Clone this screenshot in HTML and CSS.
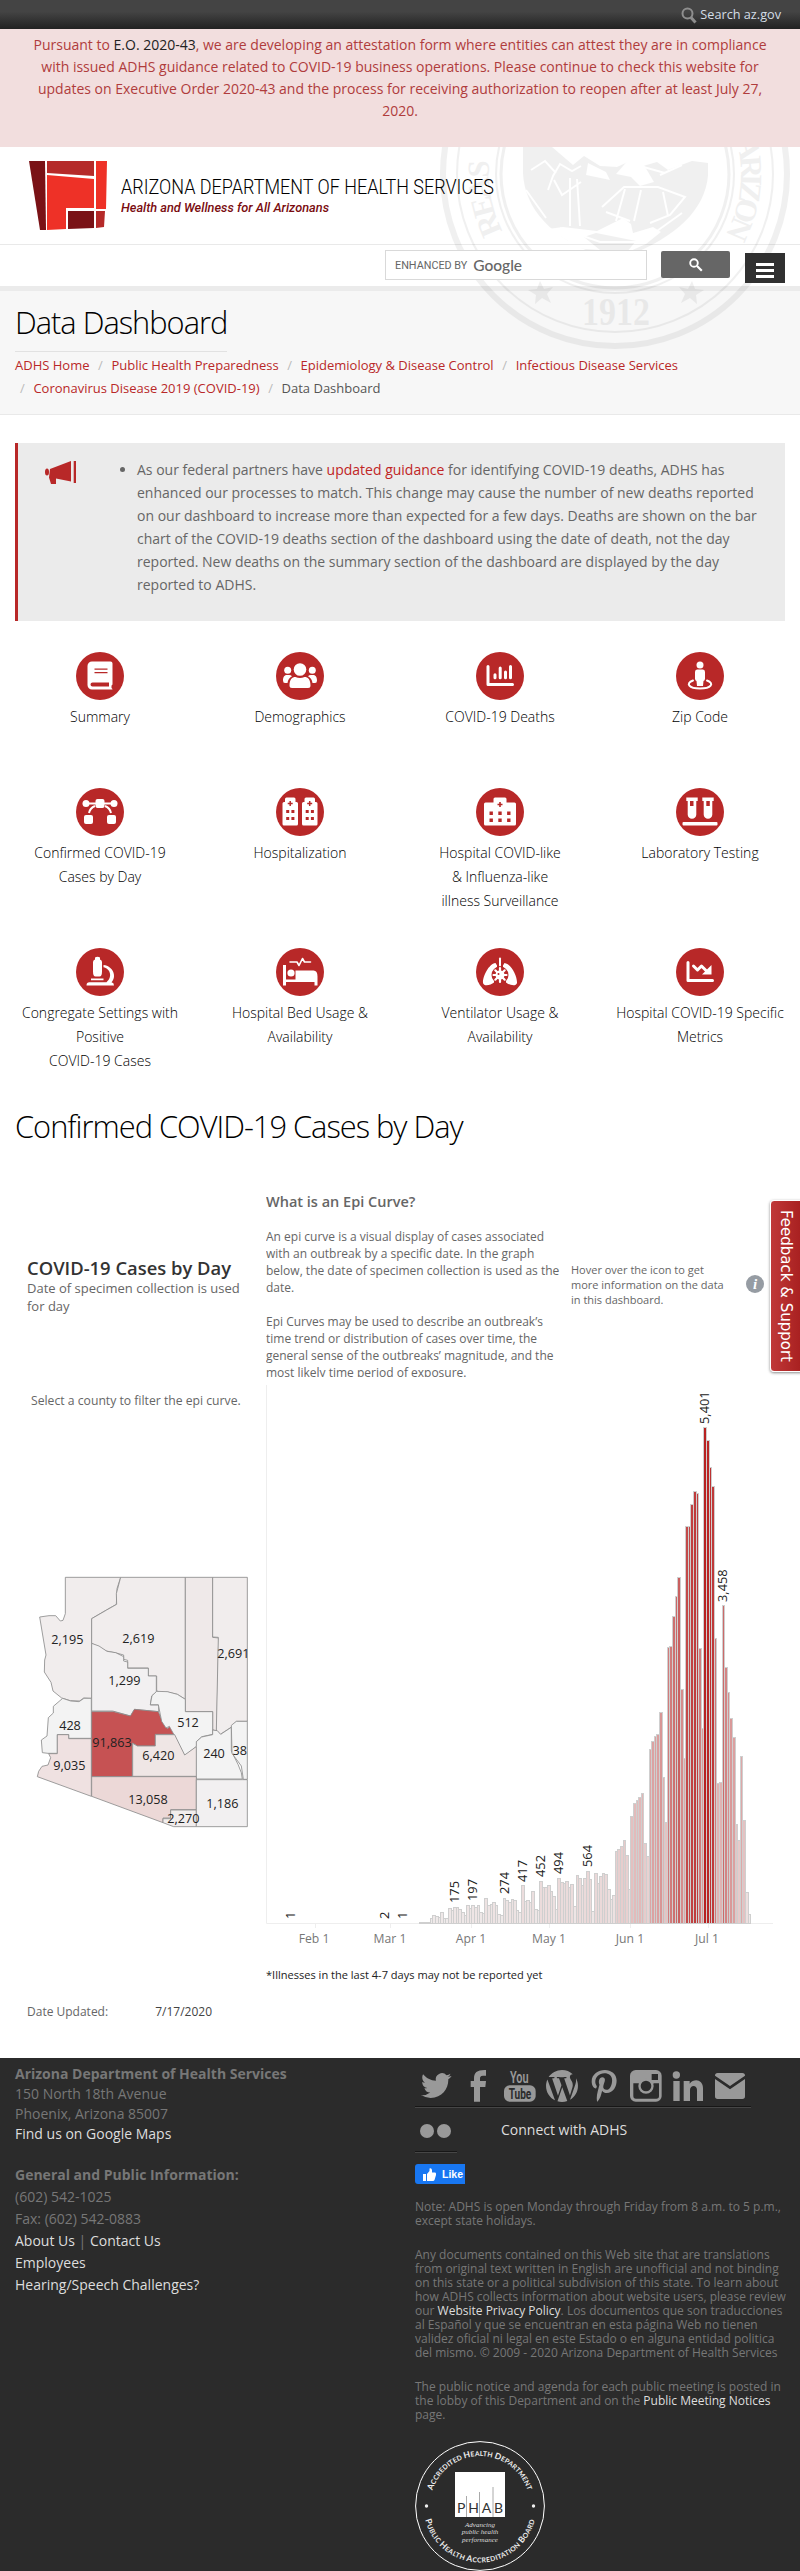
FILE: index.html
```html
<!DOCTYPE html>
<html lang="en">
<head>
<meta charset="utf-8">
<title>Data Dashboard</title>
<link rel="stylesheet" href="styles.css">
</head>
<body>
<svg class="defs" width="0" height="0" aria-hidden="true">
  <defs>
    <symbol id="i-book" viewBox="0 0 48 48"><path fill="#fff" fill-rule="evenodd" d="M15 9.500h19.500a2 2 0 0 1 2 2v20.500q0 1-1 1.500v2.500q1 .5 1 1.500h-20.500a4.500 4.500 0 0 1-4.500-4.500v-19a4.500 4.500 0 0 1 4.500-4.500zM16.500 30.500a2 2 0 0 0 0 4h16.500v-4zM18.500 16.500v1.300h13v-1.300zM18.500 20v1.300h13v-1.300z"/></symbol>
    <symbol id="i-people" viewBox="0 0 48 48"><g fill="#fff"><circle cx="24" cy="17.500" r="6.300"/><circle cx="11.700" cy="18.300" r="3.500"/><circle cx="36.300" cy="18.300" r="3.500"/><path d="M13.500 33.500c0-6 2.500-8.500 6-8.500q4.500 2 9 0c3.500 0 6 2.500 6 8.500q0 2.500-2.500 2.500h-16q-2.500 0-2.500-2.500zM7 28.500c0-4 1.700-5.500 4-5.500h2q2 0 3 1.200c-2.700 1.500-4 3.600-4.500 6.800h-2.500q-2 0-2-2.500zM41 28.500c0-4-1.700-5.500-4-5.500h-2q-2 0-3 1.200c2.700 1.500 4 3.600 4.500 6.800h2.500q2 0 2-2.500z"/></g></symbol>
    <symbol id="i-bars" viewBox="0 0 48 48"><path fill="none" stroke="#fff" stroke-width="3" stroke-linecap="round" stroke-linejoin="round" d="M12 14.500v18h24.500"/><path stroke="#fff" stroke-width="3" stroke-linecap="round" d="M19 22.800v3M24.200 16v9.800M29.500 20v5.800M34.500 14.500v11.300"/></symbol>
    <symbol id="i-pin" viewBox="0 0 48 48"><g fill="#fff"><circle cx="24" cy="13" r="3.500"/><path d="M21 17.500h6q2 0 2 2.500v6.500q0 2-1.500 2.500l-.5 5h-6l-.5-5q-1.500-.5-1.500-2.500v-6.500q0-2.500 2-2.500z"/></g><path fill="none" stroke="#fff" stroke-width="2" stroke-linecap="round" d="M17 28.500c-8 3 -4 8 7 8s15-5 7-8"/></symbol>
    <symbol id="i-net" viewBox="0 0 48 48"><g fill="#fff"><circle cx="10" cy="15.500" r="3.500"/><circle cx="38" cy="15.500" r="3.500"/><rect x="19.500" y="11" width="9" height="9" rx="2"/><rect x="8" y="27" width="9" height="9" rx="2"/><rect x="31" y="27" width="9" height="9" rx="2"/></g><path fill="none" stroke="#fff" stroke-width="2" d="M12 15.500h24M19 18q-5 2-6 7M29 18q5 2 6 7"/></symbol>
    <symbol id="i-towers" viewBox="0 0 48 48"><g fill="#fff"><path id="tw" d="M9 14v-3q0-1.500 1.500-1.500h7.500q1.500 0 1.500 1.500v3h1q1.500 0 1.500 1.500v20.500q0 1.500-1.500 1.500h-12.500q-1.500 0-1.500-1.500v-20.500q0-1.500 1.500-1.500z"/><use href="#tw" x="19.500"/></g><path stroke="#b82828" stroke-width="1.500" d="M14.200 13v5M11.700 15.500h5M33.700 13v5M31.200 15.500h5"/><path stroke="#b82828" stroke-width="3" stroke-dasharray="3 2.200" d="M10.200 23.500h8.400M29.700 23.500h8.400M10.200 30.500h8.400M29.700 30.500h8.400"/></symbol>
    <symbol id="i-hosp" viewBox="0 0 48 48"><path fill="#fff" d="M17.500 14.500v-3.500q0-1.500 1.500-1.500h10q1.500 0 1.500 1.500v3.500h8q1.500 0 1.500 1.500v20q0 1.500-1.500 1.500h-29q-1.500 0-1.500-1.500v-20q0-1.500 1.500-1.500z"/><path stroke="#b82828" stroke-width="1.600" d="M24 14v5M21.500 16.500h5"/><path stroke="#b82828" stroke-width="3.400" stroke-dasharray="3.400 5.400" d="M13.500 25.200h22M13.500 32.300h22"/></symbol>
    <symbol id="i-tubes" viewBox="0 0 48 48"><path fill="#fff" d="M10.300 9.500h11.400v3.500h-1.400v13.500a4.300 4.300 0 0 1-8.600 0v-13.500h-1.400zM26.300 9.500h11.400v3.500h-1.400v13.500a4.300 4.300 0 0 1-8.600 0v-13.500h-1.400zM7.500 34h33q1 0 1 1v1.500q0 1-1 1h-33q-1 0-1-1v-1.500q0-1 1-1z"/><path fill="#b82828" d="M14 13h3.500v5h-3.500zM30.300 13h3.500v5h-3.500z"/></symbol>
    <symbol id="i-micro" viewBox="0 0 48 48"><path fill="#fff" d="M19 9.500q2.500-1.500 5 0v2q2 .5 2 2.500v9.500q0 5-2.500 5h-4q-2.500 0-2.500-5v-9.500q0-2 2-2.500zM15 30.500h12.500v1.700h-12.500zM10.500 37.500q0-3.200 3-3.200h17c7-6 3-14-3-15v-2.300c10 1 13.500 12 8 17.300q2.500.5 2.500 3.200z"/></symbol>
    <symbol id="i-bed" viewBox="0 0 48 48"><g fill="#fff"><path d="M7 17h3v14.500h9.500v-9h18q4 0 4 6v9h-3v-3.500h-28.500v3.500h-3z"/><circle cx="15" cy="25" r="3.600"/></g><path fill="none" stroke="#fff" stroke-width="1.600" stroke-linecap="round" stroke-linejoin="round" d="M14 14h7l2 3.500 3.500-7 2 3.500h6"/></symbol>
    <symbol id="i-lungs" viewBox="0 0 48 48"><g fill="#fff"><path d="M19.500 15c-7 1-13 14-12.500 20 1 4 8 2 11-.500v-7l3-3.500v-6.500zM28.500 15c7 1 13 14 12.500 20-1 4-8 2-11-.500v-7l-3-3.500v-6.500z"/></g><path stroke="#fff" stroke-width="2" stroke-linecap="round" d="M24 10.500v7"/><circle cx="24" cy="27" r="8.500" fill="#b82828"/><path stroke="#fff" stroke-width="2.200" stroke-linecap="round" d="M24 20v14M17.500 27h13M19.300 22.300l9.400 9.400M28.700 22.300l-9.400 9.400"/><circle cx="24" cy="27" r="4.500" fill="#fff"/><circle cx="22.500" cy="26" r="1" fill="#b82828"/></symbol>
    <symbol id="i-down" viewBox="0 0 48 48"><path fill="none" stroke="#fff" stroke-width="3" stroke-linecap="round" stroke-linejoin="round" d="M12 14.500v18h24.500"/><path fill="none" stroke="#fff" stroke-width="3" stroke-linecap="round" stroke-linejoin="round" d="M17.500 18l4 4 4-4 6 6"/><path fill="#fff" d="M35.500 17v9.500h-9.500z"/></symbol>
  </defs>
</svg>

<header class="masthead">
  <div class="topbar"><svg width="16" height="17" viewBox="0 0 16 17"><circle cx="6.500" cy="6.500" r="5" fill="none" stroke="#8e8e8e" stroke-width="2"/><path d="M10 10.500l4.500 5" stroke="#8e8e8e" stroke-width="3"/></svg><span>Search az.gov</span></div>
  <div class="alert">Pursuant to <b>E.O. 2020-43</b>, we are developing an attestation form where entities can attest they are in compliance<br>with issued ADHS guidance related to COVID-19 business operations. Please continue to check this website for<br>updates on Executive Order 2020-43 and the process for receiving authorization to reopen after at least July 27,<br>2020.</div>
  <div class="brand">
    <svg width="78" height="70" viewBox="0 0 78 70"><path fill="#7a1216" d="M0 0h16l1 69h-6z"/><path fill="#b52a29" d="M18 0h47v15l-47-3z"/><path fill="#ee3127" d="M67 0h11l-1 48h-10zM18 14l47 4v29h-28v21l-19 1z"/><path fill="#7a1216" d="M39 50h26v17l-26 1z"/><path fill="#b52a29" d="M67 50h9l-1 16-8 1z"/></svg>
    <svg class="brand-name" width="380" height="44" viewBox="0 0 380 44"><text x="0" y="21" font-size="20" font-weight="300" textLength="373" lengthAdjust="spacingAndGlyphs" fill="#000">ARIZONA DEPARTMENT OF HEALTH SERVICES</text><text x="0" y="39" font-size="12" font-style="italic" font-weight="500" textLength="208" lengthAdjust="spacingAndGlyphs" fill="#7a0c10">Health and Wellness for All Arizonans</text></svg>
  </div>
  <div class="tools">
    <div class="search"><small>ENHANCED BY</small><span>Google</span></div>
    <div class="go"><svg width="14" height="14" viewBox="0 0 14 14"><circle cx="5" cy="5" r="3.800" fill="none" stroke="#fff" stroke-width="1.900"/><path d="M8 8l4.800 4.800" stroke="#fff" stroke-width="2.200"/></svg></div>
    <div class="menu"><i></i><i></i><i></i></div>
  </div>
</header>
<section class="pagehead">
  <h1>Data Dashboard</h1>
  <nav><a>ADHS Home</a><i>/</i><a>Public Health Preparedness</a><i>/</i><a>Epidemiology &amp; Disease Control</a><i>/</i><a>Infectious Disease Services</a><br><i class="first">/</i><a>Coronavirus Disease 2019 (COVID-19)</a><i>/</i><span>Data Dashboard</span></nav>
</section>
<svg class="seal" width="360" height="203" viewBox="435 147 360 203">
  <g fill="none" stroke="#000">
    <circle cx="615" cy="174" r="172" stroke-width="6"/><circle cx="615" cy="174" r="158" stroke-width="2"/><circle cx="615" cy="174" r="119" stroke-width="2"/><circle cx="615" cy="174" r="114" stroke-width="3"/>
  </g>
  <path d="M523 147h29l21 18 11-9 16 10 17 1 11-5 12 5 17-5 11 8 24-9 16 2v12c-3 38-37 66-93 86-58-18-90-48-92-88z"/>
  <g fill="none" stroke="#fff" stroke-width="2"><path d="M531 170l14-9 11 12M548 190l5-14 7-12 12 7 9-5M570 178v48M577 179l3 47M554 180l8 15 19-13M602 207l22-20h34l27 10-15 18-20 8M606 212l24 9M625 189l-9 32M641 190l-7 31M663 192l5 24M526 190l20 28M650 236l32-23M560 228l40 14h46M660 175l22-10M640 166l25 7"/></g>
  <path fill="#fff" d="M548 229l20 12 2 7 30 2-16-13 12-4 40 8-10 12 20-9 15-12-8-5-20 6-2-9-8-6-26 13-34-4zM630 158l14 7 10 17-14 4-9-9-15-3zM588 163l18 9 4 8-24-5z"/>
  <path id="ringL" fill="none" d="M502.700 231.200A126 126 0 0 1 491.700 147.800"/>
  <path id="ringR" fill="none" d="M736 139.500A126 126 0 0 1 716.900 248.100"/>
  <g font-family="Liberation Serif" font-weight="bold">
    <text font-size="31" letter-spacing="-4"><textPath href="#ringL">REA S</textPath></text>
    <text font-size="31" letter-spacing="-5"><textPath href="#ringR">ARIZON</textPath></text>
    <text x="582" y="325" font-size="40" textLength="68" lengthAdjust="spacingAndGlyphs">1912</text>
  </g>
  <path d="M540 281l4 8 9-2-6 7 4 9-9-5-7 6 1-9-8-5 9-1zM692 281l-4 8-9-2 6 7-4 9 9-5 7 6-1-9 8-5-9-1z"/>
</svg>

<main>
  <section class="notice">
    <svg width="32" height="36" viewBox="0 0 32 36"><path fill="#b82828" d="M5 9l21-8v20.500l-15-3v5.500h-5l-2-6.500zM28.700 1h2.300v22h-2.300z"/><ellipse cx="2" cy="12" rx="2" ry="3.500" fill="#b82828"/></svg>
    <ul><li>As our federal partners have <a>updated guidance</a> for identifying COVID-19 deaths, ADHS has<br>enhanced our processes to match. This change may cause the number of new deaths reported<br>on our dashboard to increase more than expected for a few days. Deaths are shown on the bar<br>chart of the COVID-19 deaths section of the dashboard using the date of death, not the day<br>reported. New deaths on the summary section of the dashboard are displayed by the day<br>reported to ADHS.</li></ul>
  </section>
  <section class="tiles">
    <div><svg class="ic"><use href="#i-book"/></svg>Summary</div>
    <div><svg class="ic"><use href="#i-people"/></svg>Demographics</div>
    <div><svg class="ic"><use href="#i-bars"/></svg>COVID-19 Deaths</div>
    <div><svg class="ic"><use href="#i-pin"/></svg>Zip Code</div>
    <div><svg class="ic"><use href="#i-net"/></svg>Confirmed COVID-19<br>Cases by Day</div>
    <div><svg class="ic"><use href="#i-towers"/></svg>Hospitalization</div>
    <div><svg class="ic"><use href="#i-hosp"/></svg>Hospital COVID-like<br>&amp; Influenza-like<br>illness Surveillance</div>
    <div><svg class="ic"><use href="#i-tubes"/></svg>Laboratory Testing</div>
    <div><svg class="ic"><use href="#i-micro"/></svg>Congregate Settings with<br>Positive<br>COVID-19 Cases</div>
    <div><svg class="ic"><use href="#i-bed"/></svg>Hospital Bed Usage &amp;<br>Availability</div>
    <div><svg class="ic"><use href="#i-lungs"/></svg>Ventilator Usage &amp;<br>Availability</div>
    <div><svg class="ic"><use href="#i-down"/></svg>Hospital COVID-19 Specific<br>Metrics</div>
  </section>
  <h2>Confirmed COVID-19 Cases by Day</h2>

  <section class="dash">
    <div class="col-left">
      <div class="intro"><h3>COVID-19 Cases by Day</h3><p>Date of specimen collection is used<br>for day</p></div>
      <p class="select">Select a county to filter the epi curve.</p>
      <svg class="map" width="270" height="300" viewBox="0 0 810 900">
        <g stroke="#8b8b8b" stroke-width="2.500" stroke-linejoin="round">
          <path fill="#f1eded" d="M196 82h166l-11 34-2 47-30 17-44 26v239l-24-1-12 9-28-1-26-8-26-21-6-26-20-31 1-36 4-15-10-60-7-42-2-12 28-4 20 0 14 16 8-2 7-20z"/>
          <path fill="#f1eded" d="M362 82h194v366l-24-15-30-7-16 6-16-10v-44h-25v-24h-62v-23l-12-3v-13l-22-6-30-6-44-23v-74l45-26 30-17-1-32z"/>
          <path fill="#efe9e9" d="M556 82h82v180l18 2-6 280-12-5v-54h-82z"/>
          <path fill="#f1eded" d="M638 82h104v432h-33l-16 18-32 21-12-12 6-279-17-1z"/>
          <path fill="#f2f0f1" d="M275 280l22 8 24 16 26 4 24 12v13l12 3v19h62v23h24v48l-14 12-4 27h25v20l-72-7-12 20-54-15h-63z"/>
          <path fill="#f3f3f3" d="M188 445l24 8 25 2 15-10h22v120h-68v-11h-34v56h-28l-17-2-3-38 17-12 4-55 15-14v-20z"/>
          <path fill="#efe1e1" d="M172 611v-57h34v12h68v173l-162-59 4-16 10-15 18-4 8-22-6-12z"/>
          <path fill="#c65253" d="M275 485h66l50 13 12-20 72 7 14 34 14 17 9-10 12 27h-58v35h-54l-15-9v101h-122z"/>
          <path fill="#f3f3f3" d="M470 424l32 1 30 8 24 15v37h82v68l-32 7-16 14v15l-36 28-32-63-14-25-10 5-13-20-10-50h-24l5-27z"/>
          <path fill="#efe6e5" d="M398 580l14 8h54v-34h58l30 61 36-26v90h-192z"/>
          <path fill="#f3f3f3" d="M589 590v-15l16-14 33-7v-14l14 2 10 11 32-21v71l20 40 10 25 3 19h-138z"/>
          <path fill="#f3f3f3" d="M694 526l15-12h33v174h-12l-6-40-28-38z"/>
          <path fill="#ecd8d7" d="M275 680h314v99h-77v25h-23v14l-214-79z"/>
          <path fill="#f1eded" d="M489 818v-12h23v-26h77v50h-68z"/>
          <path fill="#f2f0f1" d="M589 689h153v141h-153z"/>
        </g>
        <g class="maptext"><text x="202" y="283">2,195</text><text x="415" y="280">2,619</text><text x="700" y="325">2,691</text><text x="373" y="406">1,299</text><text x="210" y="541">428</text><text x="564" y="532">512</text><text x="336" y="592">91,863</text><text x="475" y="631">6,420</text><text x="642" y="625">240</text><text x="719" y="616">38</text><text x="208" y="661">9,035</text><text x="444" y="763">13,058</text><text x="667" y="775">1,186</text><text x="550" y="820">2,270</text></g>
      </svg>
      <div class="updated"><span>Date Updated:</span><b>7/17/2020</b></div>
    </div>
    <div class="col-right">
      <div class="explain">
        <div class="epi"><h4>What is an Epi Curve?</h4><p>An epi curve is a visual display of cases associated<br>with an outbreak by a specific date. In the graph<br>below, the date of specimen collection is used as the<br>date.</p><p>Epi Curves may be used to describe an outbreak’s<br>time trend or distribution of cases over time, the<br>general sense of the outbreaks’ magnitude, and the<br>most likely time period of exposure.</p></div>
        <p class="hover">Hover over the icon to get<br>more information on the data<br>in this dashboard.</p>
        <svg class="info" width="18" height="18" viewBox="0 0 18 18"><circle cx="9" cy="9" r="9" fill="#969ca3"/><text x="9" y="14" text-anchor="middle" font-family="Liberation Serif" font-weight="bold" font-style="italic" font-size="15" fill="#fff">i</text></svg>
      </div>
      <svg class="chart" id="chart" width="534" height="570" viewBox="266 1380 534 570">
        <path d="M266.500 1385v538.500h506.500M315.500 1923v5M390.500 1923v5M471.500 1923v5M549.500 1923v5M630.500 1923v5M708.500 1923v5" fill="none" stroke="#eee"/>
        <g id="bars" stroke="#cfcfcf" stroke-width="1"></g>
        <g class="axis"><text x="314" y="1943">Feb 1</text><text x="390" y="1943">Mar 1</text><text x="471" y="1943">Apr 1</text><text x="549" y="1943">May 1</text><text x="630" y="1943">Jun 1</text><text x="707" y="1943">Jul 1</text></g>
        <g class="vals" id="vals"></g>
      </svg>
      <p class="foot">*Illnesses in the last 4-7 days may not be reported yet</p>
    </div>
  </section>
</main>
<div class="feedback"><span>Feedback &amp; Support</span></div>

<footer>
  <div class="f-left">
    <p class="addr"><b>Arizona Department of Health Services</b><br>150 North 18th Avenue<br>Phoenix, Arizona 85007<br><a>Find us on Google Maps</a></p>
    <p class="contact"><b>General and Public Information:</b><br>(602) 542-1025<br>Fax: (602) 542-0883<br><a>About Us</a> | <a>Contact Us</a><br><a>Employees</a><br><a>Hearing/Speech Challenges?</a></p>
  </div>
  <div class="f-right">
    <div class="social"><svg width="336" height="46" viewBox="0 -24 1008 138" fill="#999">
      <path transform="translate(18 13) scale(3.800)" d="M23.953 4.570a10 10 0 01-2.825.775 4.958 4.958 0 002.163-2.723c-.951.555-2.005.959-3.127 1.184a4.920 4.920 0 00-8.384 4.482C7.690 8.095 4.067 6.130 1.640 3.162a4.822 4.822 0 00-.666 2.475c0 1.710.870 3.213 2.188 4.096a4.904 4.904 0 01-2.228-.616v.060a4.923 4.923 0 003.946 4.827 4.996 4.996 0 01-2.212.085 4.936 4.936 0 004.604 3.417 9.867 9.867 0 01-6.102 2.105c-.390 0-.779-.023-1.170-.067a13.995 13.995 0 007.557 2.209c9.053 0 13.998-7.496 13.998-13.985 0-.210 0-.420-.015-.630A9.935 9.935 0 0024 4.590z"/>
      <path d="M167 63v-18h10v-7c0-19 10-27 36-26v17h-9c-8 0-9 4-9 9v7h18l-2 18h-16v44h-18v-44z"/>
      <text x="285" y="51" font-size="49" font-weight="600" font-family="Roboto" textLength="56" lengthAdjust="spacingAndGlyphs">You</text>
      <rect x="267" y="58" width="95" height="49" rx="17"/><text x="281" y="98" font-size="44" font-weight="700" font-family="Roboto" textLength="68" lengthAdjust="spacingAndGlyphs" fill="#2b2b2b">Tube</text>
      <path transform="translate(387.700 6.500) scale(4.440)" d="M21.469 6.825c.840 1.537 1.318 3.300 1.318 5.175 0 3.979-2.156 7.456-5.363 9.325l3.295-9.527c.615-1.540.820-2.771.820-3.864 0-.405-.026-.780-.070-1.110m-7.981.105c.647-.030 1.232-.105 1.232-.105.582-.075.514-.930-.067-.899 0 0-1.755.135-2.880.135-1.064 0-2.850-.150-2.850-.150-.585-.030-.661.855-.075.885 0 0 .540.061 1.125.090l1.680 4.605-2.370 7.080L5.354 6.900c.649-.030 1.234-.100 1.234-.100.585-.075.516-.930-.065-.896 0 0-1.746.138-2.874.138-.200 0-.438-.008-.690-.015C4.911 3.150 8.235 1.215 12 1.215c2.809 0 5.365 1.072 7.286 2.833-.046-.003-.091-.009-.141-.009-1.060 0-1.812.923-1.812 1.914 0 .890.513 1.643 1.060 2.531.411.720.890 1.643.890 2.977 0 .915-.354 1.994-.821 3.479l-1.075 3.585-3.900-11.610.001.014zM12 22.784c-1.059 0-2.081-.153-3.048-.437l3.237-9.406 3.315 9.087c.024.053.050.101.078.149-1.120.393-2.325.609-3.582.609M1.211 12c0-1.564.336-3.050.935-4.390L7.290 21.709C3.694 19.960 1.212 16.271 1.211 12"/>
      <path transform="translate(530 11) scale(.195 .19)" d="M204 6.500C101.400 6.500 0 74.900 0 185.600 0 256 39.600 296 63.600 296c9.900 0 15.600-27.600 15.600-35.400 0-9.300-23.700-29.100-23.700-67.800 0-80.400 61.200-137.400 140.400-137.400 68.100 0 118.500 38.700 118.500 109.800 0 53.100-21.300 152.700-90.300 152.700-24.900 0-46.200-18-46.200-43.800 0-37.800 26.400-74.400 26.400-113.400 0-66.200-93.900-54.200-93.900 25.800 0 16.800 2.100 35.400 9.600 50.700-13.800 59.400-42 147.900-42 209.100 0 18.900 2.700 37.500 4.500 56.400 3.400 3.800 1.700 3.400 6.900 1.500 50.400-69 48.600-82.500 71.400-172.800 12.300 23.400 44.100 36 69.300 36 106.200 0 153.900-103.500 153.900-196.800C384 71.300 298.200 6.500 204 6.500z"/>
      <rect x="645" y="12" width="95" height="95" rx="17"/><path fill="#2b2b2b" d="M710 24h19v18h-19zM655 52h17a26 26 0 0 0 44 0h16v38q0 8-8 8h-61q-8 0-8-8z"/><circle cx="693" cy="60" r="23" fill="#999"/><circle cx="693" cy="60" r="16" fill="#2b2b2b"/>
      <circle cx="784" cy="27" r="11"/><path d="M775 45h19v60h-19zM806 45h18v8c14-17 40-12 40 14v38h-18v-33c0-16-21-15-21 0v33h-19z"/>
      <path d="M908 21h74q8 0 8 8l-45 31-45-31q0-8 8-8zM900 39l45 31 45-31v52q0 8-8 8h-74q-8 0-8-8z"/>
    </svg></div>
    <div class="connect"><div class="flickr"><i></i><i></i></div><span>Connect with ADHS</span></div>
    <div class="like"><svg width="13" height="13" viewBox="0 0 13 13" fill="#fff"><path d="M0 6h3v7h-3zM4 6l2.500-3v-2.500q2-1 2.500 1.500v2.500h3q1.500.5 1 2.500l-1.500 5q-.5 1-1.500 1h-6z"/></svg><b>Like</b></div>
    <p class="n1">Note: ADHS is open Monday through Friday from 8 a.m. to 5 p.m.,<br>except state holidays.</p>
    <p class="n2">Any documents contained on this Web site that are translations<br>from original text written in English are unofficial and not binding<br>on this state or a political subdivision of this state. To learn about<br>how ADHS collects information about website users, please review<br>our <a>Website Privacy Policy</a>. Los documentos que son traducciones<br>al Español y que se encuentran en esta página Web no tienen<br>validez oficial ni legal en este Estado o en alguna entidad politica<br>del mismo. © 2009 - 2020 Arizona Department of Health Services</p>
    <p class="n3">The public notice and agenda for each public meeting is posted in<br>the lobby of this Department and on the <a>Public Meeting Notices</a><br>page.</p>
    <svg class="phab" width="130" height="130" viewBox="0 0 130 130">
      <circle cx="65" cy="65" r="64.400" fill="none" stroke="#fff"/>
      <path id="arcT" fill="none" d="M15 65a50 50 0 0 1 100 0"/><path id="arcB" fill="none" d="M8.500 65a56.500 56.500 0 0 0 113 0"/>
      <g fill="#eee" font-family="Lato" font-weight="700" font-size="6.800" text-anchor="middle"><text letter-spacing=".15"><textPath href="#arcT" startOffset="50%"><tspan font-size="8.500">A</tspan>CCREDITED <tspan font-size="8.500">H</tspan>EALTH <tspan font-size="8.500">D</tspan>EPARTMENT</textPath></text><text letter-spacing=".35"><textPath href="#arcB" startOffset="50%"><tspan font-size="8.500">P</tspan>UBLIC <tspan font-size="8.500">H</tspan>EALTH <tspan font-size="8.500">A</tspan>CCREDITATION <tspan font-size="8.500">B</tspan>OARD</textPath></text></g>
      <circle cx="11.500" cy="65" r="1.700" fill="#eee"/><circle cx="118.500" cy="65" r="1.700" fill="#eee"/>
      <path fill="#fff" d="M40 31h50v45h-50z"/><path stroke="#aaa" d="M51.500 55v21M64.500 51v25M78 46v30"/>
      <text x="42" y="72" font-family="Lato" font-size="14" fill="#333" textLength="46" lengthAdjust="spacing">PHAB</text>
      <g font-family="Liberation Serif" font-style="italic" font-size="7" fill="#ddd" text-anchor="middle"><text x="65" y="85.500">Advancing</text><text x="65" y="93">public health</text><text x="65" y="100.500">performance</text></g>
    </svg>
  </div>
</footer>
<script src="chart.js"></script>
</body>
</html>
```
FILE: styles.css
```css
* { box-sizing: border-box; }
body { margin: 0; width: 800px; height: 2571px; position: relative; overflow-x: hidden; background: #fff; font-family: "Open Sans", sans-serif; font-size: 14px; color: #555; white-space: nowrap; }
p, h1, h2, h3, h4, ul { margin: 0; padding: 0; font-weight: 400; }
a { color: #b92828; }
i { font-style: normal; }
svg { display: block; flex: none; }
.defs { position: absolute; }
.topbar { height: 29px; display: flex; justify-content: flex-end; padding: 7px 19px 0 0; gap: 3px; background: linear-gradient(#444 40%, #222); color: #d4dde6; font-size: 12.700px; line-height: 15px; }
.alert { height: 118px; padding-top: 5px; background: #f2dede; color: #b03c3c; text-align: center; line-height: 22px; font-size: 14px; }
.alert b { font-weight: 400; color: #222; }
.brand { height: 98px; padding: 14px 0 0 29px; display: flex; gap: 14px; border-bottom: 1px solid #e9e9e9; }
.brand-name { margin-top: 12px; font-family: Roboto, sans-serif; }
.tools { height: 41px; display: flex; justify-content: flex-end; padding-right: 15px; }
.search { position: relative; z-index: 2; width: 262px; height: 30px; margin-top: 5px; border: 1px solid #d9d9d9; background: #fff; padding-left: 9px; display: flex; align-items: center; gap: 6px; color: #666; font-family: Roboto, sans-serif; }
.search small { font-size: 10.800px; }
.search span { font-size: 15.500px; font-weight: 500; font-family: Lato, sans-serif; }
.go { position: relative; z-index: 2; width: 69px; height: 27px; margin: 6px 15px 0 14px; border-radius: 2px; background: #666; display: flex; align-items: center; justify-content: center; }
.menu { position: relative; z-index: 2; width: 40px; height: 30px; margin-top: 8px; background: #303030; padding: 10px 11px; display: grid; gap: 3px; }
.menu i { height: 3px; background: #fff; }
.pagehead { height: 129px; border-top: 5px solid #ebebeb; border-bottom: 1px solid #e9e9e9; background: #f7f7f7; padding: 11px 15px 0; }
h1, h2 { font-size: 30.800px; font-weight: 300; letter-spacing: -1px; line-height: 40px; color: #000; }
h1 { height: 50px; width: 212px; border-bottom: 1px solid #e2e2e2; }
nav { font-size: 13px; line-height: 23px; margin-top: 2px; }
nav i { color: #bbb; margin: 0 8.600px; }
nav .first { margin-left: 5px; }
.seal { position: absolute; left: 435px; top: 147px; opacity: .055; }
main { display: block; height: 1615px; padding: 0 15px; }
.notice { margin-top: 28px; height: 178px; background: #ebebeb; border-left: 3px solid #b82828; padding: 15px 0 0 27px; display: flex; color: #666; }
.notice svg { margin-top: 2px; }
.notice ul { margin-left: 60px; line-height: 23px; }
.notice a { color: #c02525; }
.tiles { margin: 31px -15px 0; display: grid; grid-template-columns: repeat(4, 200px); grid-template-rows: 136px 160px 150px; text-align: center; line-height: 24px; color: #000; font-weight: 300; }
.ic { width: 48px; height: 48px; border-radius: 50%; background: #b82828; margin: 0 auto 5px; }
h2 { margin-top: 8px; }
.dash { display: flex; color: #666; font-size: 12px; }
.col-left { width: 251px; }
.intro { padding: 111px 0 0 12px; font-size: 13px; line-height: 18px; }
h3 { font-size: 18.400px; font-weight: 600; color: #333; line-height: 22px; }
.select { padding: 77px 0 0 16px; font-size: 12.200px; line-height: 18px; }
.map { margin: 140px 0 0 -15px; }
.maptext { font-size: 38px; fill: #222; text-anchor: middle; }
.updated { display: flex; justify-content: space-between; width: 197px; padding: 153px 0 0 12px; line-height: 18px; }
.updated b { font-weight: 400; color: #444; }
.col-right { width: 534px; }
.explain { height: 234px; display: flex; }
.epi { width: 305px; height: 231px; overflow: hidden; padding-top: 47px; line-height: 17px; }
.epi p { margin-bottom: 17px; }
h4 { font-size: 14.500px; font-weight: 600; line-height: 18px; margin-bottom: 17px; color: #666; }
.hover { padding-top: 116px; font-size: 11px; line-height: 15px; width: 175px; }
.info { margin-top: 129px; }
.axis { font-size: 12.200px; fill: #777; text-anchor: middle; }
.vals { font-size: 12.800px; fill: #222; }
.foot { margin-top: 16px; font-size: 11.050px; line-height: 18px; color: #222; }
.feedback { position: absolute; left: 770px; top: 1200px; width: 32px; height: 172px; background: linear-gradient(90deg, #c03838, #a82020); border: 1px solid #fff; border-radius: 4px 0 0 4px; box-shadow: 0 1px 3px #888; color: #fff; display: flex; align-items: center; justify-content: center; }
.feedback span { writing-mode: vertical-rl; font: 15px "DejaVu Sans", sans-serif; }
footer { height: 513px; background: #2b2b2b; display: flex; color: #777; font-size: 14px; }
footer a { color: #ddd; }
.f-left { width: 400px; padding: 6px 15px; }
.addr { line-height: 20px; }
.contact { margin-top: 20px; line-height: 22px; }
.f-right { width: 400px; padding-left: 15px; }
.social { height: 50px; width: 336px; border-bottom: 1px solid #464646; box-shadow: inset 0 -1px #171717; }
.connect { display: flex; gap: 44px; height: 45px; color: #ddd; line-height: 44px; }
.flickr { width: 42px; border-bottom: 1px solid #464646; box-shadow: inset 0 -1px #171717; display: flex; gap: 3px; padding: 16px 0 0 5px; }
.flickr i { width: 14px; height: 14px; border-radius: 50%; background: #999; }
.like { margin-top: 11px; width: 50px; height: 20px; border-radius: 3px 0 0 3px; background: #1877f2; color: #fff; display: flex; align-items: center; gap: 6px; padding-left: 8px; font: 10.500px "Liberation Sans", sans-serif; }
.n1, .n2, .n3 { font-size: 12px; line-height: 14px; }
.n1 { margin-top: 16px; }
.n2, .n3 { margin-top: 20px; }
.phab { margin-top: 19px; }
```
FILE: chart.js
```js
// Daily bar heights in pixels, starting on March 12.
const heights = [1, 1, 1, 1, 5.3, 8, 7, 6, 11, 5, 5, 15, 13, 16, 16, 14, 11, 8, 18, 15,
  18, 16, 18, 11, 10, 25, 18, 19, 21, 18, 9, 8, 25, 23, 21, 24, 23, 13, 11, 38, 22, 23, 21, 32, 14, 13, 42, 36, 36, 38,
  32, 27, 14, 45, 41, 40, 42, 36, 39, 17, 48, 45, 38, 45, 52, 44, 12, 50, 40, 47, 50, 49, 34, 24, 28, 72, 74, 77, 83, 68, 34,
  107, 120, 123, 126, 130, 80, 67, 174, 182, 187, 189, 211, 146, 101, 276, 277, 307, 327, 346, 234, 165, 397, 397, 419, 432, 430, 275, 195, 496, 483,
  456, 437, 285, 140, 141, 318, 256, 231, 205, 186, 99, 83, 167, 103, 31, 9];
const ns = "http://www.w3.org/2000/svg";
const base = 1923.5;
const bars = document.getElementById("bars");
const low = [240, 236, 236], high = [184, 34, 34];
heights.forEach((h, i) => {
  const x0 = Math.round(419.300 + i * 2.606), x1 = Math.round(419.300 + (i + 1) * 2.606);
  const r = document.createElementNS(ns, "rect");
  r.setAttribute("x", x0 + 0.5);
  r.setAttribute("width", x1 - x0);
  r.setAttribute("y", base - Math.round(h));
  r.setAttribute("height", Math.round(h));
  const t = h / 496;
  r.setAttribute("fill", "rgb(" + low.map((c, k) => Math.round(c + (high[k] - c) * t)) + ")");
  bars.appendChild(r);
});
const labels = [["1", 295, 1919], ["2", 389, 1919], ["1", 407, 1919], ["175", 459, 1903], ["197", 477, 1901],
  ["274", 509, 1894], ["417", 527, 1882], ["452", 545, 1877], ["494", 563, 1874], ["564", 592, 1867], ["5,401", 709, 1424], ["3,458", 727, 1602]];
const vals = document.getElementById("vals");
labels.forEach(([t, x, y]) => {
  const e = document.createElementNS(ns, "text");
  e.textContent = t;
  e.setAttribute("transform", `translate(${x} ${y}) rotate(-90)`);
  vals.appendChild(e);
});
```
